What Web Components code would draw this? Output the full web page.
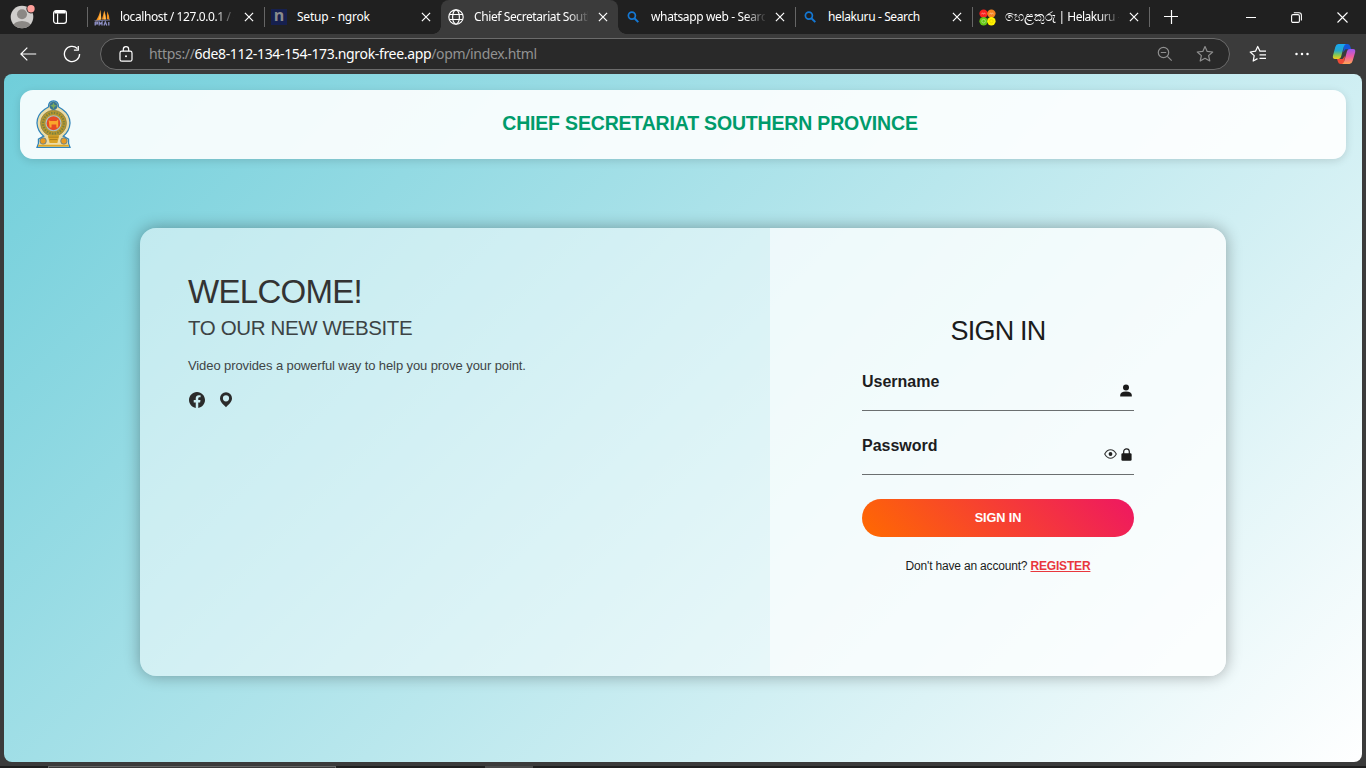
<!DOCTYPE html>
<html lang="en">
<head>
<meta charset="utf-8">
<title>Chief Secretariat Southern Province</title>
<style>
html,body{margin:0;height:100%;overflow:hidden;background:#3b3b3b}
body{font-family:"Liberation Sans",Arial,sans-serif}
</style>
</head>
<body>
<app-window></app-window>
<script>
const ICONS={
profile:'<svg width="26" height="26" viewBox="0 0 26 26"><defs><clipPath id="c"><circle cx="12" cy="14" r="11.3"/></clipPath></defs><circle cx="12" cy="14" r="11.3" fill="#d0cecc"/><g clip-path="url(#c)" fill="#8b8885"><circle cx="12" cy="11.3" r="5"/><ellipse cx="12" cy="23.5" rx="9" ry="5.5"/></g><circle cx="21" cy="5.8" r="4.6" fill="#202020"/><circle cx="21" cy="5.8" r="3.7" fill="#ff9f9a"/></svg>',
workspace:'<svg width="16" height="16" viewBox="0 0 16 16" fill="none" stroke="#fff" stroke-width="1.2"><rect x="1.6" y="1.6" width="12.8" height="12.8" rx="2.6"/><path d="M5.6 4.5V14"/><path d="M2.5 3.2h11" stroke-width="2.6"/></svg>',
pma:'<svg width="17" height="17" viewBox="0 0 17 17"><path d="M6.4.8 6.9 10.6 1.2 12.4Q5 8 6.4.8ZM10.3 1.4Q12 6 12 10.2L7.9 10.6ZM13.3 2.3Q15.3 6.5 15.5 11L12.8 10Z" fill="#f6931e"/><path d="M4.5 10.6Q6.7 5 6.4 1l1 9.5zM9.7 10.4 10.5 3l1.4 7.4z" fill="#ffba55"/><path d="M1.2 13V16.4M1.2 13.2H3.4V14.8H1.2M5.2 16.4V13.1L6.6 14.8 8 13.1V16.4M10 16.4 11.3 13 12.8 16.4M14.8 13V16.4" stroke="#8d8fc5" fill="none" stroke-width="1.3"/><path d="M.5 11.8 16 11" stroke="#777da6" stroke-width=".9"/></svg>',
globe:'<svg width="16" height="16" viewBox="0 0 16 16" fill="none" stroke="#fff" stroke-width="1.15"><circle cx="8" cy="8" r="7.2"/><ellipse cx="8" cy="8" rx="3.4" ry="7.2"/><path d="M1.4 5.5h13.2M1.4 10.5h13.2"/></svg>',
search:'<svg width="16" height="16" viewBox="0 0 16 16" fill="none" stroke="#1478d4" stroke-width="1.7"><circle cx="6.9" cy="6.6" r="3.5"/><path d="m9.4 9.200 3.900 3.900" stroke-width="2"/></svg>',
hela:'<svg width="17" height="17" viewBox="0 0 17 17"><circle cx="4.6" cy="4.6" r="4.2" fill="#f7211f"/><circle cx="12.4" cy="4.6" r="4.2" fill="#f58220"/><circle cx="4.6" cy="12.2" r="4.2" fill="#64c814"/><circle cx="12.4" cy="12.2" r="4.2" fill="#fff200"/><g fill="none" stroke-width=".8" opacity=".5"><path d="M2.5 5.3q1-3 2 0 1-3 2 0M10.6 5.3q1-3 1.8 0 1-3 2 0" stroke="#fff"/><circle cx="4.6" cy="12.2" r="1.8" stroke="#fff"/><circle cx="12.4" cy="12.2" r="1.8" stroke="#d0b000"/></g></svg>',
close:'<svg width="10" height="10" viewBox="0 0 10 10" stroke="#fff" stroke-width="1.2"><path d="m.9.9 8.2 8.2m0-8.2L.9 9.1"/></svg>',
plus:'<svg width="14" height="14" viewBox="0 0 14 14" stroke="#fff" stroke-width="1.2"><path d="M7.5 0v14M0 6.5h14"/></svg>',
min:'<svg width="10" height="10" viewBox="0 0 10 10"><path d="M0 5.5h10" stroke="#fff"/></svg>',
max:'<svg width="11" height="11" viewBox="0 0 11 11" fill="none" stroke="#fff" stroke-width="1.1"><rect x=".6" y="2.6" width="7.8" height="7.8" rx="1.4"/><path d="M2.8.8H8a2.4 2.4 0 0 1 2.4 2.4v5.2"/></svg>',
x:'<svg width="11" height="11" viewBox="0 0 11 11" stroke="#fff" stroke-width="1.1"><path d="m.5.5 10 10m0-10-10 10"/></svg>',
back:'<svg width="17" height="14" viewBox="0 0 17 14" fill="none" stroke="#fff" stroke-width="1.2"><path d="M7.3.6.9 7l6.4 6.4M1 7h15.200"/></svg>',
reload:'<svg width="18" height="18" viewBox="0 0 18 18" fill="none" stroke="#fff" stroke-width="1.3"><path d="M14.3 3.5A7.6 7.6 0 1 0 16.6 9M15.3 1v4.2h-4.4"/></svg>',
pad:'<svg width="14" height="17" viewBox="0 0 14 17" fill="none" stroke="#fff" stroke-width="1.2"><rect x="1" y="5.2" width="12" height="10" rx="1.8"/><path d="M4.3 5.2V3.400a2.7 2.7 0 0 1 5.4 0v1.800"/><circle cx="7" cy="10.200" r="1" fill="#fff" stroke="none"/></svg>',
zoom:'<svg width="16" height="16" viewBox="0 0 16 16" fill="none" stroke="#8f8f8f" stroke-width="1.2"><circle cx="6.5" cy="6.5" r="5.2"/><path d="M3.8 6.5h5.4M10.4 10.4l4.3 4.3"/></svg>',
star:'<svg width="18" height="18" viewBox="0 0 18 18" fill="none" stroke="#8f8f8f" stroke-width="1.2" stroke-linejoin="round"><path d="m9 1.5 2.2 4.9 5.5.6-4.1 3.6 1.2 5.4L9 13.3 4.200 16l1.200-5.400L1.300 7l5.500-.600z"/></svg>',
fav:'<svg width="18" height="18" viewBox="0 0 18 18" fill="none" stroke="#fff" stroke-width="1.25" stroke-linejoin="round"><path d="M17 6.200H11L8.700 1.500 6.500 6.200 1.200 7l4 3.600-1 5.400 4.300-2.400M10.500 9.800H17M10.500 13.400H17"/></svg>',
dots:'<svg width="14" height="4" viewBox="0 0 14 4" fill="#fff"><circle cx="1.500" cy="2" r="1.25"/><circle cx="7" cy="2" r="1.25"/><circle cx="12.500" cy="2" r="1.250"/></svg>',
copilot:'<svg width="24" height="22" viewBox="0 0 24 22"><defs><linearGradient id="a" x2="0" y2="1"><stop stop-color="#16a8f5"/><stop offset=".45" stop-color="#28a8c8"/><stop offset=".75" stop-color="#8fcb4b"/><stop offset="1" stop-color="#f8cb1c"/></linearGradient><linearGradient id="b" x2="0" y2="1"><stop stop-color="#9b57ee"/><stop offset=".5" stop-color="#ed5ba1"/><stop offset="1" stop-color="#ffa553"/></linearGradient></defs><path d="M12 1h3.500q2 0 2.600 2l1 3.200h-5.600l-2.300 3z" fill="#1456d9"/><path d="M12 21H8.600q-2 0-2.600-2l-1-3h5.500l2.500-3z" fill="#ee4b37"/><path d="M6.500 1H14q-1.600.5-2.300 3L9 14q-.7 2-2.700 2H3Q.2 16 1 12.600L3.300 3.900Q4.100 1 6.500 1Z" fill="url(#a)"/><path d="M17.500 21H10q1.600-.5 2.300-3L15 8.200q.6-2.200 2.800-2.200H21q2.900 0 2.100 3.400l-2.500 8.700Q19.800 21 17.500 21Z" fill="url(#b)"/></svg>',
facebook:'<svg width="16" height="16" viewBox="0 0 16 16"><path d="M16 8.049c0-4.446-3.582-8.050-8-8.050C3.580 0 0 3.603 0 8.050c0 4.017 2.926 7.347 6.750 7.951v-5.625H4.719V8.050H6.750V6.275c0-2.017 1.195-3.131 3.022-3.131.876 0 1.791.157 1.791.157v1.980h-1.009c-.993 0-1.303.621-1.303 1.258v1.510h2.218l-.354 2.326H9.250V16c3.824-.604 6.750-3.934 6.750-7.951" fill="#2b2b2b"/></svg>',
pin:'<svg width="12" height="16" viewBox="0 0 12 16"><path fill-rule="evenodd" d="M6 .3a6 6 0 0 0-6 6c0 3.700 3 5.700 6 9C9 12 12 10 12 6.300a6 6 0 0 0-6-6m0 2.900a3.100 3.100 0 1 1 0 6.200 3.100 3.100 0 0 1 0-6.200" fill="#2b2b2b"/></svg>',
person:'<svg width="12" height="13" viewBox="0 0 12 13" fill="#1a1a1a"><circle cx="6" cy="3.500" r="3"/><path d="M.2 12.500V11c0-2 2-3.600 5.800-3.600s5.800 1.600 5.800 3.600v1.500z"/></svg>',
eye:'<svg width="13" height="10" viewBox="0 0 13 10" fill="none" stroke="#333" stroke-width="1.1"><path d="M.7 5Q3 .8 6.500.8T12.300 5Q10 9.200 6.500 9.200T.7 5Z"/><circle cx="6.500" cy="5" r="1.900" fill="#222" stroke="none"/></svg>',
lock:'<svg width="11" height="13" viewBox="0 0 11 13"><path d="M2.700 6V3.600a2.800 2.800 0 0 1 5.600 0V6" fill="none" stroke="#1a1a1a" stroke-width="1.200"/><rect x=".4" y="5.300" width="10.200" height="7.400" rx="1.200" fill="#1a1a1a"/></svg>',
emblem:'<svg width="35" height="49" viewBox="0 0 36 50"><g stroke="#3184ba" stroke-width="1.300"><path d="M18 .8q5.200.2 5.200 6.200l3.800 2.300Q35 15 35 23.500 34.500 32 28 37l5.500 3v4.500l1.500 4H1l1.500-4V40L8 37Q1.500 32 1 23.500 1 15 9 9.300L12.800 7Q12.800 1 18 .8Z" fill="#ecdca6"/></g><circle cx="18" cy="5.800" r="4.300" fill="#397590"/><path d="m18 2.300 1 2.500 2.500 1-2.500 1-1 2.500-1-2.500-2.500-1 2.500-1z" fill="#7ba95c"/><circle cx="18" cy="23.700" r="13.300" fill="#b8962f" stroke="#8a8248" stroke-width=".8"/><circle cx="18" cy="23.700" r="10.700" fill="none" stroke="#78813f" stroke-width="2.200" stroke-dasharray="1.500 1.300"/><circle cx="18" cy="23.700" r="7.700" fill="#e64a25" stroke="#a8c3c4" stroke-width="1.200"/><path d="M13 20.500 15 21.500h6l1.800-1.800V28h-1.900v-3H16v3h-2z" fill="#f9a72c"/><path d="M12 36h12l-2 8h-8z" fill="#dba426"/><path d="M13 38h10M14 40.500h8" stroke="#a47d20"/><circle cx="7.300" cy="42" r="3.300" fill="#e79a22" stroke="#4a7aa0" stroke-width=".8"/><circle cx="28.700" cy="42" r="3.300" fill="#e79a22" stroke="#4a7aa0" stroke-width=".8"/><path d="M2.500 45.800h31l.3 1.800H2.200z" fill="#e1a720"/></svg>'
};
function define(name,tpl){
  customElements.define(name,class extends HTMLElement{
    constructor(){super();this.attachShadow({mode:'open'}).innerHTML=tpl}
  });
}
customElements.define('ui-icon',class extends HTMLElement{
  connectedCallback(){
    if(this.shadowRoot)return;
    this.attachShadow({mode:'open'}).innerHTML='<style>:host{display:block;flex:none;line-height:0}svg{display:block}b{display:block;width:16px;height:16px;background:#16204f;color:#8c8c8c;font:bold 16px/13px "Open Sans",sans-serif;text-align:center}</style>'+(this.getAttribute('name')==='ngrok'?'<b>n</b>':ICONS[this.getAttribute('name')]);
  }
});
customElements.define('browser-tab',class extends HTMLElement{
  connectedCallback(){
    if(this.shadowRoot)return;
    this.attachShadow({mode:'open'}).innerHTML=`<style>
:host{display:grid;grid-template-columns:26px 114px 1fr;align-items:center;width:177px;height:34px;box-sizing:border-box;padding-left:7px;position:relative;color:#fff;font:12px/16px "Noto Sans","Segoe UI",sans-serif;flex:none}
:host([divider])::before{content:"";position:absolute;left:0;top:7px;width:1px;height:20px;background:#666}
:host([active]){background:#3b3b3b;border-radius:8px 8px 0 0}
:host([active])::before,:host([active])::after{content:"";position:absolute;bottom:0;width:8px;height:8px}
:host([active])::before{left:-8px;background:radial-gradient(circle at 0 0,#202020 7.500px,#3b3b3b 8px)}
:host([active])::after{right:-8px;background:radial-gradient(circle at 100% 0,#202020 7.500px,#3b3b3b 8px)}
span{display:block;overflow:hidden;white-space:nowrap;letter-spacing:var(--ls,0)}
:host([fade]) span{-webkit-mask:linear-gradient(90deg,#000 94px,transparent 116px)}
.x{justify-self:start;margin-left:10px}
</style><ui-icon name="${this.getAttribute('icon')}"></ui-icon><span><slot></slot></span><ui-icon class="x" name="close"></ui-icon>`;
  }
});
define('tab-end','<style>:host{display:block;width:1px;height:20px;background:#666}</style>');
define('tab-strip',`<style>
:host{display:flex;align-items:center;height:34px;background:#202020}
.profile{margin-left:10px;margin-bottom:2px}.ws{margin:0 19px 0 16px}.new{margin-left:14px}
.win{margin-left:auto;display:flex;align-items:center;gap:35px;padding-right:18px}
.si{font-size:13.300px;letter-spacing:0;line-height:1}
</style>
<ui-icon class="profile" name="profile"></ui-icon><ui-icon class="ws" name="workspace"></ui-icon>
<browser-tab icon="pma" divider fade style="--ls:-.4px">localhost / 127.0.0.1 / opm</browser-tab>
<browser-tab icon="ngrok" divider style="--ls:-.24px">Setup - ngrok</browser-tab>
<browser-tab icon="globe" active fade style="--ls:-.4px">Chief Secretariat Southern</browser-tab>
<browser-tab icon="search" fade style="--ls:-.36px">whatsapp web - Search</browser-tab>
<browser-tab icon="search" divider style="--ls:-.38px">helakuru - Search</browser-tab>
<browser-tab icon="hela" divider fade style="--ls:-.5px"><span class="si">හෙළකුරු</span> | Helakuru - </browser-tab>
<tab-end></tab-end>
<ui-icon class="new" name="plus"></ui-icon>
<div class="win"><ui-icon name="min"></ui-icon><ui-icon name="max"></ui-icon><ui-icon name="x"></ui-icon></div>`);
define('address-bar',`<style>
:host{display:flex;align-items:center;height:40px;background:#3b3b3b;box-sizing:border-box;padding-left:20px}
.reload{margin:0 19px 0 26px}
.field{width:1130px;height:32px;box-sizing:border-box;border:1px solid #6b6b6b;border-radius:16px;background:#292929;display:flex;align-items:center;padding:0 15px 0 18px}
.url{flex:1;margin-left:16px;font:14px/20px "Noto Sans","Segoe UI",sans-serif;letter-spacing:-.34px;color:#929292;white-space:nowrap}
.url b{font-weight:400;color:#fff}
.star{margin-left:23px}.fav{margin:0 28px 0 19px}.cp{margin-left:23px}
</style>
<ui-icon name="back"></ui-icon><ui-icon class="reload" name="reload"></ui-icon>
<div class="field"><ui-icon name="pad"></ui-icon><div class="url">https://<b>6de8-112-134-154-173.ngrok-free.app</b>/opm/index.html</div><ui-icon name="zoom"></ui-icon><ui-icon class="star" name="star"></ui-icon></div>
<ui-icon class="fav" name="fav"></ui-icon><ui-icon name="dots"></ui-icon><ui-icon class="cp" name="copilot"></ui-icon>`);
define('site-header',`<style>
:host{display:grid;grid-template-columns:54px 1fr;align-items:center;height:69px;box-sizing:border-box;padding:0 15px;border-radius:13px;background:rgba(255,255,255,.9);box-shadow:0 2px 8px rgba(0,0,0,.13)}
h1{margin:0 0 3px;text-align:center;font-size:19.500px;line-height:24px;color:#009b6b;letter-spacing:-.18px;font-weight:700}
ui-icon{padding-left:1px}
</style><ui-icon name="emblem"></ui-icon><h1>CHIEF SECRETARIAT SOUTHERN PROVINCE</h1>`);
define('welcome-panel',`<style>
:host{display:block;width:630px;box-sizing:border-box;padding:44px 48px;color:#333}
h2,h3,p{margin:0;font-weight:400;white-space:nowrap}
h2{font-size:33px;line-height:40px;letter-spacing:-.7px}h3{font-size:20.500px;line-height:24px;margin-top:4px;letter-spacing:-.36px;color:#3c4344}
p{font-size:13px;line-height:18px;margin-top:17px;letter-spacing:-.1px;color:#3f4546}
div{display:flex;gap:15px;margin:17px 0 0 1px}
</style><h2>WELCOME!</h2><h3>TO OUR NEW WEBSITE</h3><p>Video provides a powerful way to help you prove your point.</p>
<div><ui-icon name="facebook"></ui-icon><ui-icon name="pin"></ui-icon></div>`);
define('form-field',`<style>
:host{display:flex;justify-content:space-between;height:38px;border-bottom:1px solid #6b6f70;color:#1d1d1f;font-weight:700;font-size:16px;line-height:20px}
div{display:flex;gap:4px;align-items:center;height:20px;margin:8px 2px 0 0}
</style><span><slot></slot></span><div><slot name="icons"></slot></div>`);
define('sign-in-form',`<style>
:host{display:flex;flex-direction:column;flex:1;background:rgba(255,255,255,.55);padding:87px 92px 0;border-radius:0 16px 16px 0;color:#1c1c1c}
h2{margin:0 0 25px;font-size:27px;line-height:32px;font-weight:400;text-align:center;letter-spacing:-.8px}
form-field{margin-bottom:25px}form-field:last-of-type{margin-bottom:24px}
button{border:0;height:38px;padding:0;border-radius:19px;background:linear-gradient(45deg,#ff6a00,#ee1762);color:#fff;font:bold 12.700px/37px "Liberation Sans",Arial,sans-serif;letter-spacing:-.1px}
p{margin:20px 0 0;text-align:center;font-size:12px;line-height:18px;letter-spacing:-.18px;white-space:nowrap}a{color:#e9373d;font-weight:700;text-decoration:underline}
</style><h2>SIGN IN</h2>
<form-field>Username<ui-icon slot="icons" name="person"></ui-icon></form-field>
<form-field>Password<ui-icon slot="icons" name="eye"></ui-icon><ui-icon slot="icons" name="lock"></ui-icon></form-field>
<button>SIGN IN</button><p>Don't have an account? <a>REGISTER</a></p>`);
define('login-card',`<style>
:host{display:flex;width:1086px;height:448px;margin:69px 0 0 120px;border-radius:16px;background:rgba(255,255,255,.5);box-shadow:0 0 16px rgba(0,0,0,.33)}
</style><welcome-panel></welcome-panel><sign-in-form></sign-in-form>`);
define('web-page',`<style>
:host{display:block;height:688px;margin:0 4px;box-sizing:border-box;padding:16px;border-radius:8px;background:linear-gradient(135deg,#70ceda,#fff)}
</style><site-header></site-header><login-card></login-card>`);
define('task-edge',`<style>
:host{display:grid;grid-template-columns:48px 288px 149px 48px 1fr;height:2px;margin-top:4px;background:#1f1f1f}
i:nth-of-type(2){border:1px solid #666;border-bottom:0;background:#3a3a3a}i:nth-of-type(4){background:#4a4a4a}
</style><i></i><i></i><i></i><i></i><i></i>`);
define('app-window',`<style>:host{display:block;width:1366px;height:768px;overflow:hidden;background:#3b3b3b}</style>
<tab-strip></tab-strip><address-bar></address-bar><web-page></web-page><task-edge></task-edge>`);
</script>
</body>
</html>
